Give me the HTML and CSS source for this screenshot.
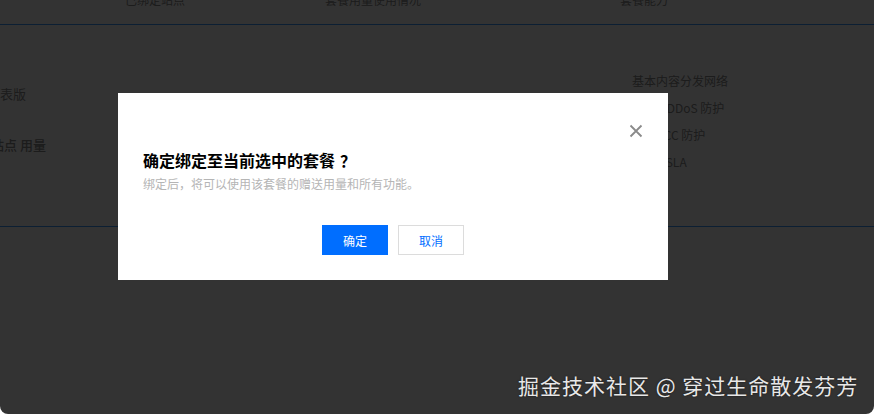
FILE: index.html
```html
<!DOCTYPE html>
<html lang="zh-CN">
<head>
<meta charset="utf-8">
<link rel="stylesheet" href="styles.css">
</head>
<body>
<div class="page">
  <div class="table">
    <div class="thead">
      <div class="th th-site">已绑定站点</div>
      <div class="th th-usage">套餐用量使用情况</div>
      <div class="th th-cap">套餐能力</div>
    </div>
    <div class="tbody">
      <div class="col-left">
        <div class="cell-a">表版</div>
        <div class="cell-b"><span class="cut">站</span>点 用量</div>
      </div>
      <div class="col-right">
        <div class="cap">基本内容分发网络</div>
        <div class="cap cap-2">基础 DDoS 防护</div>
        <div class="cap cap-3">基础 CC 防护</div>
        <div class="cap cap-4">可用性 SLA</div>
      </div>
    </div>
  </div>

  <div class="mask"></div>

  <div class="dialog">
    <button class="close" aria-label="关闭">
      <svg width="14" height="14" viewBox="0 0 14 14"><path d="M1.5 1.5 L12.5 12.5 M12.5 1.5 L1.5 12.5" stroke="#8a8a8a" stroke-width="1.8" fill="none"/></svg>
    </button>
    <div class="title">确定绑定至当前选中的套餐<span class="qmark">？</span></div>
    <div class="desc">绑定后，将可以使用该套餐的赠送用量和所有功能。</div>
    <div class="actions">
      <button class="btn btn-primary">确定</button>
      <button class="btn btn-default">取消</button>
    </div>
  </div>

  <div class="watermark">掘金技术社区 @ 穿过生命散发芬芳</div>
</div>
</body>
</html>
```
FILE: styles.css
```css
html, body {
  margin: 0;
  padding: 0;
  background: #ffffff;
}
body {
  width: 874px;
  height: 414px;
  overflow: hidden;
  font-family: "Noto Sans CJK SC", "Noto Sans", "Liberation Sans", sans-serif;
}
.page {
  position: relative;
  width: 874px;
  height: 414px;
  background: #ffffff;
  border-radius: 0 0 8px 8px;
  overflow: hidden;
}
.table {
  color: #8c8c8c;
}
.thead {
  display: flex;
  font-size: 12px;
  line-height: 12px;
  margin-top: -6px;
  height: 31px;
  box-sizing: border-box;
  border-bottom: 1px solid #3f9bff;
}
.th-site { margin-left: 125px; width: 200px; }
.th-usage { width: 295px; }
.tbody {
  display: flex;
  justify-content: space-between;
  height: 202px;
  border-bottom: 1px solid #3f9bff;
  box-sizing: border-box;
}
.col-left {
  font-size: 13px;
}
.cell-a {
  margin-top: 61px;
  line-height: 16px;
}
.cell-b {
  margin-top: 35px;
  line-height: 16px;
  margin-left: -9px;
  font-weight: 500;
}
.col-right {
  width: 242px;
  padding-top: 49px;
  font-size: 12px;
}
.cap {
  line-height: 14px;
  margin-bottom: 13px;
  white-space: nowrap;
}
.cap-2 { margin-left: 8px; }
.cap-3 { margin-left: 5px; }
.cap-4 { margin-left: -5px; }
.mask {
  position: absolute;
  inset: 0;
  background: rgba(0, 0, 0, 0.8);
}
.dialog {
  position: absolute;
  left: 118px;
  top: 93px;
  width: 550px;
  height: 187px;
  box-sizing: border-box;
  background: #ffffff;
  padding: 55px 25px 25px 25px;
}
.close {
  position: absolute;
  right: 25px;
  top: 31px;
  width: 14px;
  height: 14px;
  padding: 0;
  border: 0;
  background: none;
  display: flex;
}
.title {
  font-size: 16px;
  font-weight: 700;
  line-height: 24px;
  color: #000;
}
.qmark {
  margin-left: 5px;
}
.desc {
  margin-top: 2px;
  font-size: 12px;
  line-height: 20px;
  color: #b5b5b5;
}
.actions {
  display: flex;
  justify-content: center;
  gap: 10px;
  margin-top: 31px;
}
.btn {
  width: 66px;
  height: 30px;
  box-sizing: border-box;
  font-family: inherit;
  font-size: 12px;
  padding: 0;
  cursor: pointer;
}
.btn-primary {
  background: #006eff;
  border: 1px solid #006eff;
  color: #ffffff;
}
.btn-default {
  background: #ffffff;
  border: 1px solid #dcdcdc;
  color: #006eff;
}
.watermark {
  position: absolute;
  left: 518px;
  top: 370px;
  font-size: 21px;
  line-height: 30px;
  color: #e8e8e8;
  letter-spacing: 1px;
  text-shadow: 0 0 2px rgba(0,0,0,0.6);
  white-space: nowrap;
}
```
